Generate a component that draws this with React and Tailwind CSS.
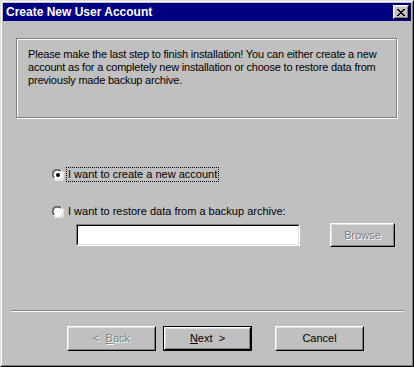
import { useState } from 'react';

const font = { fontFamily: '"Liberation Sans", Arial, sans-serif' };

function Radio({ checked }) {
  return (
    <svg width="12" height="12" viewBox="0 0 12 12" className="shrink-0">
      <circle cx="6" cy="6" r="5.5" fill="#fff" />
      <path d="M1.2 9 A5.5 5.5 0 0 1 9 1.2" stroke="#808080" strokeWidth="1" fill="none" />
      <path d="M2.2 8.6 A4.5 4.5 0 0 1 8.6 2.2" stroke="#000" strokeWidth="1" fill="none" />
      <path d="M10.8 3 A5.5 5.5 0 0 1 3 10.8" stroke="#fff" strokeWidth="1" fill="none" />
      <path d="M9.8 3.4 A4.5 4.5 0 0 1 3.4 9.8" stroke="#dfdfdf" strokeWidth="1" fill="none" />
      {checked && <circle cx="6" cy="6" r="2" fill="#000" />}
    </svg>
  );
}

function Btn({ children, disabled, isDefault, className = '' }) {
  const inner = (
    <div className="h-full border border-t-white border-l-white border-r-black border-b-black">
      <div className="h-full flex items-center justify-center border border-t-[#dfdfdf] border-l-[#dfdfdf] border-r-[#808080] border-b-[#808080]">
        <span
          className={disabled ? 'text-[#808080] [text-shadow:1px_1px_0_#fff]' : 'text-black'}
        >
          {children}
        </span>
      </div>
    </div>
  );
  if (isDefault) {
    return <div className={`border border-black ${className}`}>{inner}</div>;
  }
  return <div className={className}>{inner}</div>;
}

export default function App() {
  const [choice, setChoice] = useState('create');

  return (
    <div className="w-[414px] h-[367px] bg-[#c0c0c0] text-[11px] leading-[13px]" style={font}>
      <div className="h-full border border-t-[#dfdfdf] border-l-[#dfdfdf] border-r-black border-b-black">
        <div className="h-full flex flex-col border border-t-white border-l-white border-r-[#808080] border-b-[#808080] p-px">
          {/* Title bar */}
          <div className="h-[18px] bg-[#000080] flex items-center pl-[3px] pr-[2px]">
            <span className="text-white font-bold text-[12px] flex-1">Create New User Account</span>
            <div className="w-[16px] h-[14px] bg-[#c0c0c0] border border-t-white border-l-white border-r-black border-b-black">
              <div className="w-full h-full border border-r-[#808080] border-b-[#808080] border-t-[#dfdfdf] border-l-[#dfdfdf] flex items-center justify-center">
                <svg width="8" height="7" viewBox="0 0 8 7">
                  <path d="M0 0h2v1h1v1h2v-1h1v-1h2v1h-1v1h-1v1h-1v1h1v1h1v1h1v1h-2v-1h-1v-1h-2v1h-1v1h-2v-1h1v-1h1v-1h1v-1h-1v-1h-1v-1h-1z" fill="#000" />
                </svg>
              </div>
            </div>
          </div>

          {/* Info box */}
          <div className="mt-[17px] ml-[13px] mr-[14px] h-[80px] border border-[#808080] shadow-[inset_1px_1px_0_#fff,1px_1px_0_#fff] px-[11px] pt-[9px]">
            <p className="whitespace-nowrap tracking-[-0.2px]">
              Please make the last step to finish installation! You can either create a new
              <br />
              account as for a completely new installation or choose to restore data from
              <br />
              previously made backup archive.
            </p>
          </div>

          {/* Options */}
          <div className="mt-[48px] ml-[49px] flex flex-col">
            <label className="flex items-center h-[17px]" onClick={() => setChoice('create')}>
              <Radio checked={choice === 'create'} />
              <span className={`ml-[3px] px-px ${choice === 'create' ? 'outline outline-1 outline-dotted outline-black' : ''}`}>
                I want to create a new account
              </span>
            </label>
            <label className="flex items-center h-[17px] mt-[20px]" onClick={() => setChoice('restore')}>
              <Radio checked={choice === 'restore'} />
              <span className="ml-[4px]">I want to restore data from a backup archive:</span>
            </label>
            <div className="flex items-center mt-[3px] ml-[24px]">
              <div className="w-[224px] h-[22px] border border-t-[#808080] border-l-[#808080] border-r-white border-b-white">
                <div className="h-full border border-t-black border-l-black border-r-[#dfdfdf] border-b-[#dfdfdf] bg-white" />
              </div>
              <Btn disabled className="ml-[30px] w-[65px] h-[24px]">Browse</Btn>
            </div>
          </div>

          {/* Separator */}
          <div className="mt-auto mx-[8px] h-[2px] border-t border-t-[#808080] border-b border-b-white" />

          {/* Buttons */}
          <div className="flex mt-[14px] mb-[13px] ml-[64px]">
            <Btn disabled className="w-[89px] h-[25px]">
              <span>&lt;&nbsp;&nbsp;<u>B</u>ack</span>
            </Btn>
            <Btn isDefault className="ml-[7px] w-[89px] h-[25px]">
              <span><u>N</u>ext&nbsp;&nbsp;&gt;</span>
            </Btn>
            <Btn className="ml-[23px] w-[89px] h-[25px]">Cancel</Btn>
          </div>
        </div>
      </div>
    </div>
  );
}
